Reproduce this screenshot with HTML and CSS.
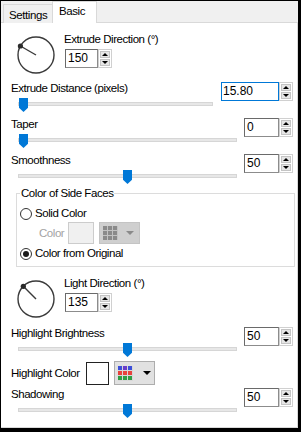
FILE: index.html
```html
<!DOCTYPE html>
<html>
<head>
<meta charset="utf-8">
<link rel="stylesheet" href="styles.css">
</head>
<body>
<div class="window">
  <div class="tabstrip">
    <div class="tab">Settings</div>
    <div class="tab tab--active">Basic</div>
  </div>
  <div class="panel">
    <div class="dial-row dial-row--first">
      <svg class="dial" width="40" height="40" viewBox="0 0 40 40">
        <circle cx="20" cy="20" r="18" fill="#fff" stroke="#3a3a3a" stroke-width="1.4"/>
        <line x1="20" y1="20" x2="4.4" y2="11" stroke="#3a3a3a" stroke-width="1.4"/>
        <circle cx="4.4" cy="11" r="2.6" fill="#2a2a2a"/>
      </svg>
      <div class="dial-ctrl">
        <div class="label">Extrude Direction (°)</div>
        <div class="spin spin--dial">
          <div class="spin-field">150</div>
          <div class="spin-btns"><span class="spin-btn"><i class="tri-up"></i></span><span class="spin-btn"><i class="tri-down"></i></span></div>
        </div>
      </div>
    </div>

    <div class="slider-row slider-row--first">
      <div class="slider-col">
        <div class="label">Extrude Distance (pixels)</div>
        <div class="slider slider--short"><div class="track"></div><div class="thumb" style="left:1px"></div></div>
      </div>
      <div class="spin spin--wide">
        <div class="spin-field spin-field--focus">15.80</div>
        <div class="spin-btns"><span class="spin-btn"><i class="tri-up"></i></span><span class="spin-btn"><i class="tri-down"></i></span></div>
      </div>
    </div>

    <div class="slider-row">
      <div class="slider-col">
        <div class="label">Taper</div>
        <div class="slider"><div class="track"></div><div class="thumb" style="left:1px"></div></div>
      </div>
      <div class="spin">
        <div class="spin-field">0</div>
        <div class="spin-btns"><span class="spin-btn"><i class="tri-up"></i></span><span class="spin-btn"><i class="tri-down"></i></span></div>
      </div>
    </div>

    <div class="slider-row">
      <div class="slider-col">
        <div class="label">Smoothness</div>
        <div class="slider"><div class="track"></div><div class="thumb" style="left:105px"></div></div>
      </div>
      <div class="spin">
        <div class="spin-field">50</div>
        <div class="spin-btns"><span class="spin-btn"><i class="tri-up"></i></span><span class="spin-btn"><i class="tri-down"></i></span></div>
      </div>
    </div>

    <div class="group">
      <div class="group-title">Color of Side Faces</div>
      <div class="radio-row radio-row--first">
        <span class="radio"></span><span class="label">Solid Color</span>
      </div>
      <div class="color-row">
        <span class="label label--disabled color-label">Color</span>
        <span class="swatch swatch--disabled"></span>
        <span class="color-btn color-btn--disabled">
          <svg width="15" height="14" viewBox="0 0 15 14">
            <rect width="15" height="14" fill="#c2c2c2"/>
            <rect x="0" y="0" width="4" height="4" fill="#8a8a8a"/><rect x="5" y="0" width="4" height="4" fill="#8a8a8a"/><rect x="10" y="0" width="4" height="4" fill="#8a8a8a"/>
            <rect x="0" y="5" width="4" height="4" fill="#8a8a8a"/><rect x="5" y="5" width="4" height="4" fill="#8a8a8a"/><rect x="10" y="5" width="4" height="4" fill="#8a8a8a"/>
            <rect x="0" y="10" width="4" height="4" fill="#8a8a8a"/><rect x="5" y="10" width="4" height="4" fill="#8a8a8a"/><rect x="10" y="10" width="4" height="4" fill="#8a8a8a"/>
          </svg>
          <i class="caret caret--disabled"></i>
        </span>
      </div>
      <div class="radio-row">
        <span class="radio radio--checked"></span><span class="label">Color from Original</span>
      </div>
    </div>

    <div class="dial-row dial-row--second">
      <svg class="dial" width="40" height="40" viewBox="0 0 40 40">
        <circle cx="20" cy="20" r="18" fill="#fff" stroke="#3a3a3a" stroke-width="1.4"/>
        <line x1="20" y1="20" x2="7.3" y2="7.3" stroke="#3a3a3a" stroke-width="1.4"/>
        <circle cx="7.3" cy="7.3" r="2.6" fill="#2a2a2a"/>
      </svg>
      <div class="dial-ctrl">
        <div class="label">Light Direction (°)</div>
        <div class="spin spin--dial">
          <div class="spin-field">135</div>
          <div class="spin-btns"><span class="spin-btn"><i class="tri-up"></i></span><span class="spin-btn"><i class="tri-down"></i></span></div>
        </div>
      </div>
    </div>

    <div class="slider-row slider-row--after-dial">
      <div class="slider-col">
        <div class="label">Highlight Brightness</div>
        <div class="slider"><div class="track"></div><div class="thumb" style="left:105px"></div></div>
      </div>
      <div class="spin">
        <div class="spin-field">50</div>
        <div class="spin-btns"><span class="spin-btn"><i class="tri-up"></i></span><span class="spin-btn"><i class="tri-down"></i></span></div>
      </div>
    </div>

    <div class="hl-row">
      <span class="label hl-label">Highlight Color</span>
      <span class="swatch swatch--white"></span>
      <span class="color-btn">
        <svg width="15" height="15" viewBox="0 0 15 15">
          <rect width="15" height="15" fill="#d8d8d8"/>
          <rect x="0" y="0" width="4" height="4" fill="#3b4fd8"/><rect x="5" y="0" width="4" height="4" fill="#6a3cc8"/><rect x="10" y="0" width="4" height="4" fill="#3b4fd8"/>
          <rect x="0" y="5" width="4" height="4" fill="#e8423c"/><rect x="5" y="5" width="4" height="4" fill="#e8423c"/><rect x="10" y="5" width="4" height="4" fill="#e8423c"/>
          <rect x="0" y="10" width="4" height="4" fill="#2f9e44"/><rect x="5" y="10" width="4" height="4" fill="#2f9e44"/><rect x="10" y="10" width="4" height="4" fill="#2f9e44"/>
        </svg>
        <i class="caret"></i>
      </span>
    </div>

    <div class="slider-row slider-row--last">
      <div class="slider-col">
        <div class="label">Shadowing</div>
        <div class="slider"><div class="track"></div><div class="thumb" style="left:105px"></div></div>
      </div>
      <div class="spin">
        <div class="spin-field">50</div>
        <div class="spin-btns"><span class="spin-btn"><i class="tri-up"></i></span><span class="spin-btn"><i class="tri-down"></i></span></div>
      </div>
    </div>
  </div>
</div>
</body>
</html>
```

FILE: styles.css
```css
* { box-sizing: border-box; }
html, body { margin: 0; padding: 0; background: #000; }
body {
  font-family: "Liberation Sans", Arial, sans-serif;
  font-size: 11.5px;
  color: #000;
}
.window {
  width: 301px;
  height: 432px;
  border-top: 1px solid #000;
  border-left: 1px solid #000;
  border-right: 3px solid #000;
  border-bottom: 4px solid #000;
  background: #fff;
  display: flex;
  flex-direction: column;
}
.tabstrip {
  height: 22px;
  background: #f0f0f0;
  border-bottom: 1px solid #d9d9d9;
  display: flex;
  align-items: flex-end;
  padding-left: 2px;
  flex: none;
}
.tab {
  height: 19px;
  margin-bottom: -1px;
  border: 1px solid #d9d9d9;
  border-bottom: none;
  background: #f0f0f0;
  padding: 4px 0 0 5px;
  width: 50px;
  line-height: 13px;
  letter-spacing: -0.4px;
}
.tab--active {
  height: 22px;
  width: 45px;
  margin-left: -1px;
  background: #fff;
  padding: 3px 0 0 6px;
  position: relative;
}
.panel {
  flex: 1;
  background: #fff;
  border-right: 1px solid #d9d9d9;
  border-bottom: 1px solid #d9d9d9;
  display: flex;
  flex-direction: column;
}
.label {
  line-height: 13px;
  letter-spacing: -0.45px;
  white-space: nowrap;
}
.label--disabled { color: #a3a3a3; }

/* dial rows */
.dial-row {
  display: flex;
  align-items: flex-start;
  padding-left: 15px;
}
.dial-row--first { margin-top: 10px; }
.dial-row--second { margin-top: 10px; }
.dial { display: block; margin-top: 2px; flex: none; }
.dial-ctrl { margin-left: 8px; }
.dial-ctrl .spin { margin-top: 3px; margin-left: 1px; }

/* spin boxes */
.spin {
  display: flex;
  height: 19px;
}
.spin-field {
  width: 35px;
  height: 19px;
  border: 1px solid #8c8c8c;
  border-top-color: #6a6a6a;
  border-left-color: #6a6a6a;
  background: #fff;
  font-size: 12px;
  line-height: 17px;
  padding-left: 2px;
  color: #000;
}
.spin--dial .spin-field { width: 33px; }
.spin--wide .spin-field { width: 58px; padding-left: 1px; }
.spin-field--focus { border-color: #0078d7; }
.spin-btns {
  width: 14px;
  height: 19px;
  border: 1px solid #d0d0d0;
  padding: 1px;
  display: flex;
  flex-direction: column;
  gap: 1px;
  background: #fff;
}
.spin-btn {
  flex: 1;
  background: #e6e6e6;
  border: 1px solid #c4c4c4;
  display: flex;
  align-items: center;
  justify-content: center;
}
.tri-up, .tri-down {
  display: block;
  width: 0;
  height: 0;
  border-left: 3px solid transparent;
  border-right: 3px solid transparent;
}
.tri-up { border-bottom: 3px solid #000; }
.tri-down { border-top: 3px solid #000; }

/* slider rows */
.slider-row {
  display: flex;
  justify-content: space-between;
  align-items: flex-start;
  padding: 0 4px 0 10px;
  margin-top: 5px;
}
.slider-row--first { margin-top: 7px; }
.slider-row--after-dial { margin-top: 8px; }
.slider-row--last { margin-top: 3px; }
.slider-col { display: flex; flex-direction: column; }
.slider {
  position: relative;
  width: 219px;
  height: 18px;
  margin-left: 7px;
  padding-top: 7px;
}
.slider--short { width: 195px; }
.track {
  height: 4px;
  background: #e7e7e7;
  border: 1px solid #d6d6d6;
}
.thumb {
  position: absolute;
  top: 3px;
  width: 9px;
  height: 14px;
  background: #0078d7;
  clip-path: polygon(0 0, 100% 0, 100% 70%, 50% 100%, 0 70%);
}

/* group */
.group {
  margin: 8px 2px 0 15px;
  border: 1px solid #dcdcdc;
  padding: 0 0 6px 3px;
}
.group-title {
  width: fit-content;
  margin: -7px 0 0 0;
  padding: 0 1px;
  background: #fff;
  line-height: 13px;
  letter-spacing: -0.45px;
}
.radio-row {
  display: flex;
  align-items: center;
  height: 13px;
  margin-top: 3px;
}
.radio-row--first { margin-top: 7px; }
.radio {
  width: 12px;
  height: 12px;
  border: 1px solid #333;
  border-radius: 50%;
  background: #fff;
  margin-right: 3px;
  display: flex;
  align-items: center;
  justify-content: center;
  flex: none;
}
.radio--checked::after {
  content: "";
  width: 6px;
  height: 6px;
  border-radius: 50%;
  background: #1a1a1a;
}
.color-row {
  display: flex;
  align-items: center;
  height: 22px;
  margin-top: 2px;
  padding-left: 19px;
}
.color-label { width: 29px; }
.swatch {
  display: block;
  width: 26px;
  height: 22px;
}
.swatch--disabled { background: #f0f0f0; border: 1px solid #cccccc; }
.swatch--white { width: 23px; height: 23px; background: #fff; border: 1px solid #222; }
.color-btn {
  display: flex;
  align-items: center;
  width: 41px;
  height: 22px;
  margin-left: 5px;
  padding-left: 3px;
  background: #e1e1e1;
  border: 1px solid #adadad;
}
.color-btn--disabled { background: #cfcfcf; border-color: #c4c4c4; padding-top: 0; }
.color-btn svg { display: block; }
.caret {
  display: block;
  width: 0;
  height: 0;
  margin-left: 10px;
  border-left: 4px solid transparent;
  border-right: 4px solid transparent;
  border-top: 4px solid #000;
}
.caret--disabled { border-top-color: #8a8a8a; margin-left: 8px; }

/* highlight color row */
.hl-row {
  display: flex;
  align-items: center;
  height: 24px;
  margin-top: 3px;
  padding-left: 10px;
}
.hl-label { width: 75px; }
.hl-row .color-btn { height: 24px; margin-left: 5px; }
```
